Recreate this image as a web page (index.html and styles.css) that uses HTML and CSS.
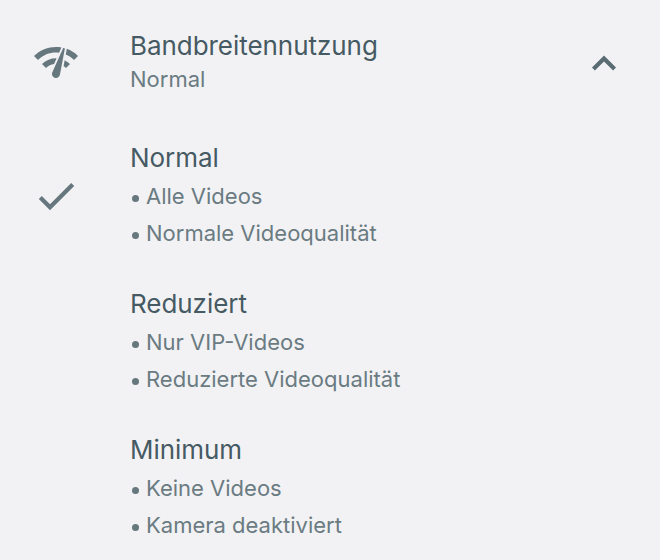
FILE: index.html
```html
<!DOCTYPE html>
<html lang="de">
<head>
  <meta charset="UTF-8" />
  <meta name="viewport" content="width=device-width, initial-scale=1.0"/>
  <title>Bandbreitennutzung</title>
  <link rel="stylesheet" href="styles.css">
</head>
<body>

  <header class="setting">
    <div class="icon">
      <svg width="48" height="48" viewBox="0 0 24 24">
        <path d="M15.9 5c-.17 0-.32.09-.41.23l-.07.15-5.18 11.65c-.16.29-.26.61-.26.96 0 1.11.9 2.01 2.01 2.01.96 0 1.77-.68 1.96-1.59l.01-.03L16.4 5.5c0-.28-.22-.5-.5-.5zM1 9l2 2c2.88-2.88 6.79-4.08 10.53-3.62l1.19-2.68C9.89 3.84 4.74 5.27 1 9zm20 2l2-2c-1.64-1.64-3.55-2.82-5.59-3.57l-.53 2.82c1.5.62 2.9 1.53 4.12 2.75zm-4 4l2-2c-.8-.8-1.7-1.42-2.66-1.89l-.55 2.92c.42.27.83.59 1.21.97zM5 13l2 2c1.13-1.13 2.56-1.79 4.03-2l1.28-2.88c-2.63-.08-5.3.87-7.31 2.88z"/>
      </svg>
    </div>
    <div class="label">
      <h2>Bandbreitennutzung</h2>
      <p>Normal</p>
    </div>
    <svg class="chevron" width="48" height="48" viewBox="0 0 24 24">
      <path d="M12 7.8l-6 6 1.45 1.45L12 10.7l4.55 4.55L18 13.8z"/>
    </svg>
  </header>

  <div class="option">
    <div class="icon">
      <svg width="48" height="48" viewBox="0 0 24 24">
        <path d="M9 16.1L4.9 12l-1.5 1.5L9 19.1 21.1 7l-1.5-1.5z"/>
      </svg>
    </div>
    <div class="details">
      <h2>Normal</h2>
      <ul>
        <li>Alle Videos</li>
        <li>Normale Videoqualität</li>
      </ul>
    </div>
  </div>

  <div class="option">
    <div class="icon"></div>
    <div class="details">
      <h2>Reduziert</h2>
      <ul>
        <li>Nur VIP-Videos</li>
        <li>Reduzierte Videoqualität</li>
      </ul>
    </div>
  </div>

  <div class="option">
    <div class="icon"></div>
    <div class="details">
      <h2>Minimum</h2>
      <ul>
        <li>Keine Videos</li>
        <li>Kamera deaktiviert</li>
      </ul>
    </div>
  </div>

</body>
</html>
```
FILE: styles.css
```css
body {
  margin: 0;
  height: 560px;
  overflow: hidden;
  background-color: #f2f2f4;
  color: #6a7b82;
  font-family: Inter, sans-serif;
  font-size: 22px;
}

h2, p, ul {
  margin: 0;
  padding: 0;
}

h2 {
  color: #465a63;
  font-size: 26px;
  font-weight: 400;
  letter-spacing: -0.05px;
  line-height: 36px;
}

svg {
  display: block;
  fill: #66777e;
}

.setting {
  display: flex;
  padding-top: 28px;
  height: 112px;
}

.icon {
  display: flex;
  justify-content: center;
  width: 112px;
  margin-right: 18px;
  flex-shrink: 0;
}

.setting .icon {
  padding-top: 10px;
}

.label {
  flex: 1;
}

.label p {
  line-height: 30px;
}

.chevron {
  margin: 12px 32px 0 0;
  fill: #5a6c73;
}

.option {
  display: flex;
  height: 146px;
}

.option .icon {
  align-items: center;
  height: 112px;
}

.details ul {
  padding-top: 2px;
  list-style: none;
}

.details li {
  display: flex;
  align-items: center;
  line-height: 37px;
}

.details li::before {
  content: "";
  width: 7px;
  height: 7px;
  margin: 3px 7.5px 0 1.5px;
  border-radius: 50%;
  background-color: #66777e;
}
```
